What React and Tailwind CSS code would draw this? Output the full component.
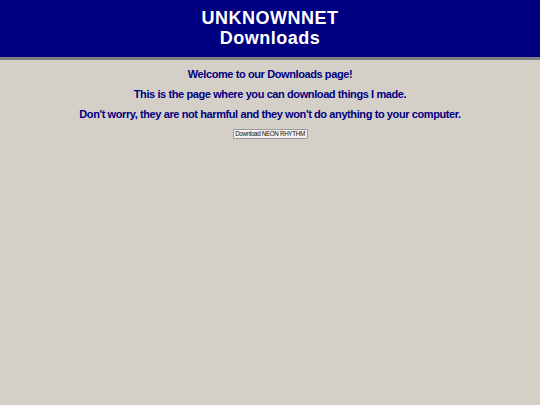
export default function App() {
  return (
    <div className="min-h-[405px] bg-[#d4d0c8]" style={{ fontFamily: '"Liberation Sans", Arial, sans-serif' }}>
      <div className="bg-[#000080] border-b-[3px] border-[#808080] h-[60px] pt-[8px] text-center text-white font-bold text-[18px] leading-[20px] tracking-[0.5px]">
        <div>UNKNOWNNET</div>
        <div>Downloads</div>
      </div>
      <div className="text-center text-[#000080] font-bold text-[11px] leading-[20px] tracking-[-0.4px] pt-[4px]">
        <p>Welcome to our Downloads page!</p>
        <p>This is the page where you can download things I made.</p>
        <p>Don't worry, they are not harmful and they won't do anything to your computer.</p>
        <div className="font-normal tracking-[-0.35px] mt-[3px] leading-none">
          <button className="bg-[#f2f2f2] border border-[#9a9a9a] text-[#111] text-[6.3px] leading-[8px] h-[10px] w-[75px] px-0 py-0 rounded-[1px]">Download NEON RHYTHM</button>
        </div>
      </div>
    </div>
  );
}
